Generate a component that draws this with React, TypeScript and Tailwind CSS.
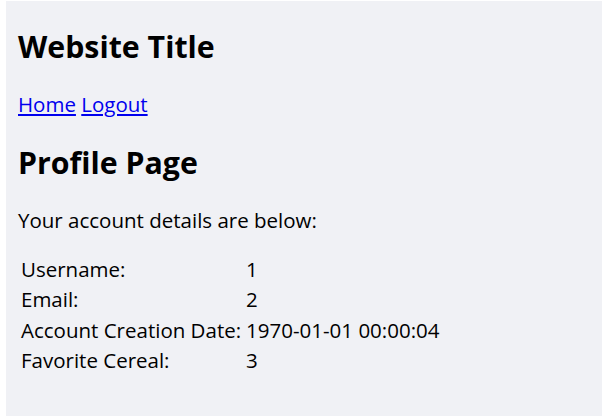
export default function App() {
  const rows: [string, string][] = [
    ["Username:", "1"],
    ["Email:", "2"],
    ["Account Creation Date:", "1970-01-01 00:00:04"],
    ["Favorite Cereal:", "3"],
  ];
  return (
    <div className="w-[602px] h-[416px] bg-white pl-[6px] pt-[1px] overflow-hidden">
      <div
        className="h-[415px] bg-[#f0f1f5] px-[12px] text-black text-[20.5px]"
        style={{ fontFamily: '"Open Sans", sans-serif' }}
      >
        <h1 className="pt-[25.8px] text-[30.3px] font-bold leading-[40px]">Website Title</h1>
        <nav className="mt-[23.2px] leading-[28px]">
          <a href="#" className="text-[#0000ee] underline">Home</a>{" "}
          <a href="#" className="text-[#0000ee] underline">Logout</a>
        </nav>
        <h2 className="mt-[25.4px] text-[30.3px] font-bold leading-[40px]">Profile Page</h2>
        <p className="mt-[22.6px] leading-[28px]">Your account details are below:</p>
        <table className="mt-[19px] border-separate border-spacing-[2px]">
          <tbody>
            {rows.map(([k, v]) => (
              <tr key={k}>
                <td className="p-[1px] pr-[2px] leading-[26.33px] whitespace-nowrap">{k}</td>
                <td className="p-[1px] leading-[26.33px] whitespace-nowrap">{v}</td>
              </tr>
            ))}
          </tbody>
        </table>
      </div>
    </div>
  );
}
